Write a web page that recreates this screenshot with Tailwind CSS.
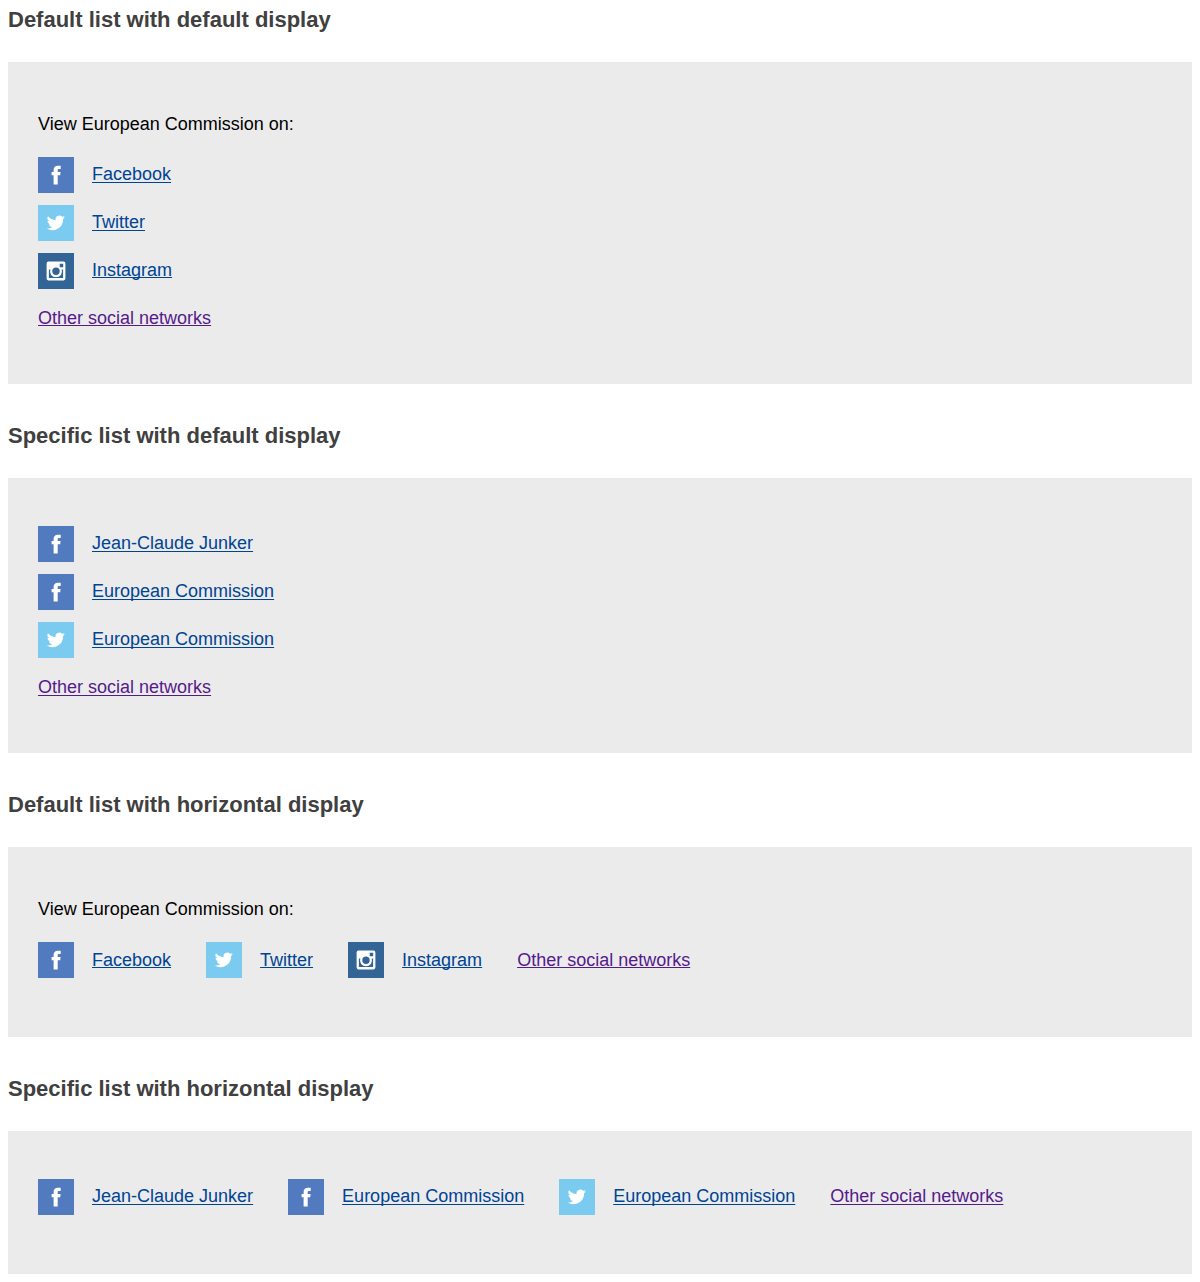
<!DOCTYPE html>
<html lang="en"><head><meta charset="utf-8"><title>Social media links</title>
<script src="https://cdn.jsdelivr.net/npm/@tailwindcss/browser@4"></script></head>
<body class="bg-white px-2 font-['Liberation_Sans',Arial,sans-serif] text-lg leading-6 text-black [text-decoration-skip-ink:none]">
<svg class="hidden">
<symbol id="facebook" viewBox="0 0 36 36"><path fill="#fff" d="M15.600 27.500v-9.300h-2v-3.200h2v-1.800c0-3 1.400-4.500 4.200-4.500h2.900v3.300h-1.700c-1 0-1.300.4-1.300 1.300v1.700h2.900l-.4 3.200h-2.500v9.300z"/></symbol>
<symbol id="twitter" viewBox="0 0 36 36"><path fill="#fff" transform="translate(8.700 8.900) scale(.76 .75)" d="M24 4.600a10 10 0 0 1-2.800.8 5 5 0 0 0 2.100-2.700c-1 .5-2 1-3.100 1.200a4.900 4.900 0 0 0-8.400 4.500C7.700 8.200 4.100 6.200 1.700 3.200a4.900 4.900 0 0 0 1.500 6.500 4.900 4.900 0 0 1-2.200-.6c0 2.300 1.600 4.400 3.900 4.900a5 5 0 0 1-2.200.1 4.900 4.900 0 0 0 4.600 3.400A9.900 9.900 0 0 1 0 19.500a14 14 0 0 0 21.500-12.400A10 10 0 0 0 24 4.600z"/></symbol>
<symbol id="instagram" viewBox="0 0 36 36"><path fill="#fff" fill-rule="evenodd" d="M10.400 8.600h15.200a1.800 1.800 0 0 1 1.800 1.800v15.200a1.800 1.800 0 0 1-1.800 1.800H10.400a1.800 1.800 0 0 1-1.800-1.800V10.400a1.800 1.800 0 0 1 1.800-1.800zM21.700 10.800v3.500h3.500v-3.500zM10.900 16.500v8.600h14.200v-8.600h-1.400a6 6 0 1 1-11.400 0zM18 14.500a3.700 3.700 0 1 0 0 7.400 3.700 3.700 0 0 0 0-7.400z"/></symbol>
</svg>
<main>
<h2 class="h-[62px] pt-2 text-[22px] font-bold text-[#404040]">Default list with default display</h2>
<section class="h-[322px] bg-[#ebebeb] px-[30px] pt-[50px]">
<p class="mb-[21px]">View European Commission on:</p>
<ul class="flex flex-col gap-3">
<li class="flex h-9 gap-[18px]"><svg class="size-9 bg-[#527abe]"><use href="#facebook"/></svg><a class="pt-[5px] text-[#004494] underline underline-offset-2" href="#">Facebook</a></li>
<li class="flex h-9 gap-[18px]"><svg class="size-9 bg-[#7acbef]"><use href="#twitter"/></svg><a class="pt-[5px] text-[#004494] underline underline-offset-2" href="#">Twitter</a></li>
<li class="flex h-9 gap-[18px]"><svg class="size-9 bg-[#326596]"><use href="#instagram"/></svg><a class="pt-[5px] text-[#004494] underline underline-offset-1" href="#">Instagram</a></li>
<li class="pt-[5px]"><a class="text-[#551a8b] underline underline-offset-1" href="#">Other social networks</a></li>
</ul></section>
<h2 class="h-[94px] pt-10 text-[22px] font-bold text-[#404040]">Specific list with default display</h2>
<section class="h-[275px] bg-[#ebebeb] px-[30px] pt-12">
<ul class="flex flex-col gap-3">
<li class="flex h-9 gap-[18px]"><svg class="size-9 bg-[#527abe]"><use href="#facebook"/></svg><a class="pt-[5px] text-[#004494] underline underline-offset-2" href="#">Jean-Claude Junker</a></li>
<li class="flex h-9 gap-[18px]"><svg class="size-9 bg-[#527abe]"><use href="#facebook"/></svg><a class="pt-[5px] text-[#004494] underline underline-offset-2" href="#">European Commission</a></li>
<li class="flex h-9 gap-[18px]"><svg class="size-9 bg-[#7acbef]"><use href="#twitter"/></svg><a class="pt-[5px] text-[#004494] underline underline-offset-2" href="#">European Commission</a></li>
<li class="pt-[5px]"><a class="text-[#551a8b] underline underline-offset-2" href="#">Other social networks</a></li>
</ul></section>
<h2 class="h-[94px] pt-10 text-[22px] font-bold text-[#404040]">Default list with horizontal display</h2>
<section class="h-[190px] bg-[#ebebeb] px-[30px] pt-[50px]">
<p class="mb-[21px]">View European Commission on:</p>
<ul class="flex gap-[35px]">
<li class="flex h-9 gap-[18px]"><svg class="size-9 bg-[#527abe]"><use href="#facebook"/></svg><a class="pt-1.5 text-[#004494] underline underline-offset-1" href="#">Facebook</a></li>
<li class="flex h-9 gap-[18px]"><svg class="size-9 bg-[#7acbef]"><use href="#twitter"/></svg><a class="pt-1.5 text-[#004494] underline underline-offset-1" href="#">Twitter</a></li>
<li class="flex h-9 gap-[18px]"><svg class="size-9 bg-[#326596]"><use href="#instagram"/></svg><a class="pt-1.5 text-[#004494] underline underline-offset-1" href="#">Instagram</a></li>
<li class="pt-1.5"><a class="text-[#551a8b] underline underline-offset-1" href="#">Other social networks</a></li>
</ul></section>
<h2 class="h-[94px] pt-10 text-[22px] font-bold text-[#404040]">Specific list with horizontal display</h2>
<section class="h-[143px] bg-[#ebebeb] px-[30px] pt-12">
<ul class="flex gap-[35px]">
<li class="flex h-9 gap-[18px]"><svg class="size-9 bg-[#527abe]"><use href="#facebook"/></svg><a class="pt-[5px] text-[#004494] underline underline-offset-2" href="#">Jean-Claude Junker</a></li>
<li class="flex h-9 gap-[18px]"><svg class="size-9 bg-[#527abe]"><use href="#facebook"/></svg><a class="pt-[5px] text-[#004494] underline underline-offset-2" href="#">European Commission</a></li>
<li class="flex h-9 gap-[18px]"><svg class="size-9 bg-[#7acbef]"><use href="#twitter"/></svg><a class="pt-[5px] text-[#004494] underline underline-offset-2" href="#">European Commission</a></li>
<li class="pt-[5px]"><a class="text-[#551a8b] underline underline-offset-2" href="#">Other social networks</a></li>
</ul></section>
</main></body></html>
